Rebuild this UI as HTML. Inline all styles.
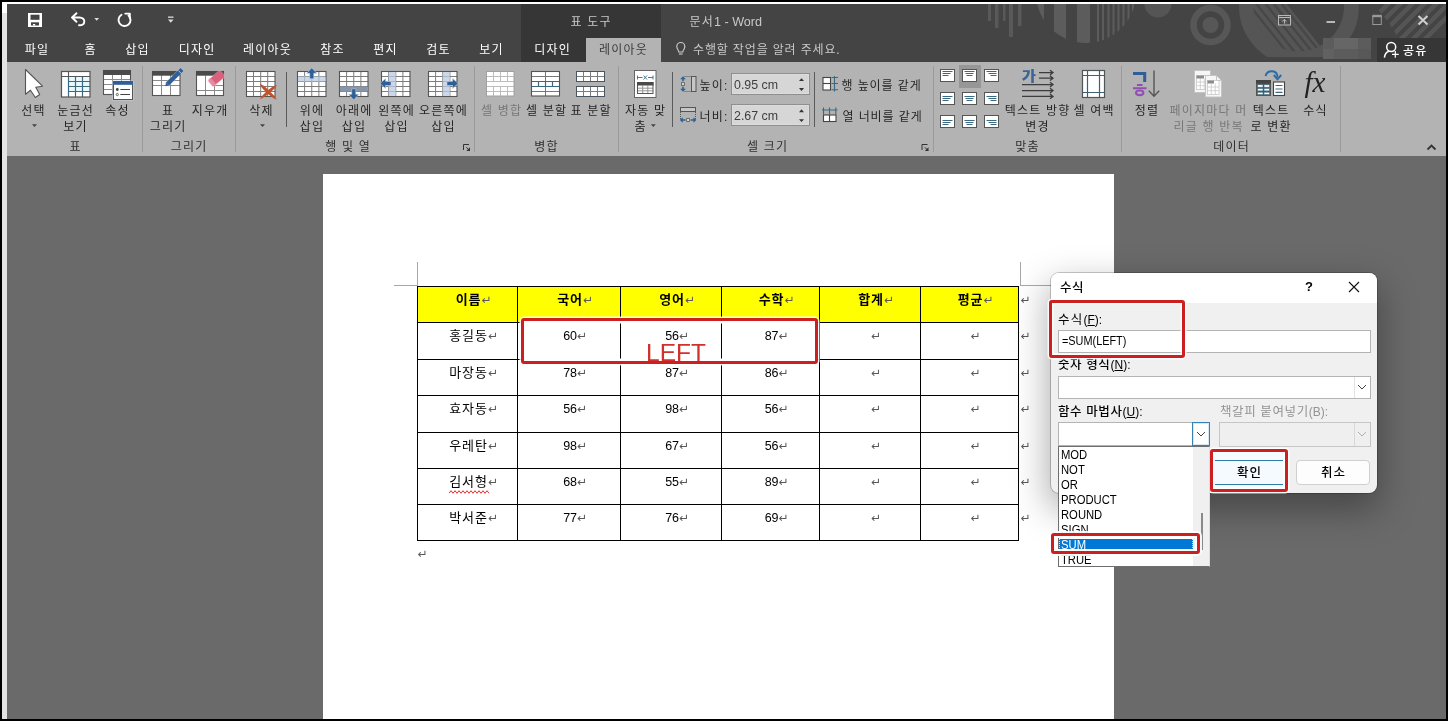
<!DOCTYPE html>
<html lang="ko">
<head>
<meta charset="utf-8">
<title>문서1 - Word</title>
<style>
*{box-sizing:border-box;margin:0;padding:0}
html,body{width:1448px;height:721px;overflow:hidden;background:#000}
body{font-family:"Liberation Sans","Noto Sans CJK KR",sans-serif;font-size:12px;letter-spacing:1.2px;color:#333;position:relative}
.a{position:absolute}
.t{margin-top:1px;padding-left:1.2px;position:absolute;white-space:nowrap;line-height:16px;height:16px;transform:translateX(-50%);text-align:center}
.l{margin-top:1px;position:absolute;white-space:nowrap;line-height:16px;height:16px}
#frame{will-change:transform;left:0;top:0;width:1448px;height:721px;background:#6a6a6a;overflow:hidden}
#title{left:7px;top:4px;width:1439px;height:58px;background:#444;overflow:hidden}
#ribbon{left:7px;top:62px;width:1439px;height:94px;background:#b3b3b3}
.tab{color:#fff;top:41px}
.bk{position:absolute;background:#000;z-index:50}
.sep{position:absolute;width:1px;background:#9a9a9a;top:66px;height:86px}
.dsep{position:absolute;width:1px;background:#5a5a5a;top:72px;height:55px}
.gl{color:#303030;top:138px}
.bl{color:#262626}
.dis{color:#787878}
.n{letter-spacing:0}
span.n{font-size:.96em}
.li{left:2px;color:#000;font-size:12.500px;line-height:15px;height:15px;transform:scaleX(.9);transform-origin:0 0}
.sx{transform-origin:0 0}
/* document */
#paper{left:323px;top:174px;width:791px;height:560px;background:#fff}
table{border-collapse:collapse}
.pm{display:inline-block;width:8px;font-family:"DejaVu Sans",sans-serif;font-size:12px;color:#585858;font-weight:normal;letter-spacing:0;vertical-align:0}
.c{color:#000;font-size:13px;letter-spacing:1px;font-weight:400;height:20px;line-height:20px}
.h{font-weight:bold}
.d{font-size:12.5px;letter-spacing:0}
</style>
</head>
<body>
<div id="frame" class="a">
<div class="a" style="left:2px;top:2px;width:5px;height:717px;background:#e4e4e4"></div>
<div class="a" style="left:2px;top:2px;width:1444px;height:2px;background:#fff"></div>
<div class="a" style="left:2px;top:2px;width:5px;height:11px;background:#fff"></div>
<div id="title" class="a"></div>
<div id="ribbon" class="a"></div>
<!--TITLEBAR-->
<svg class="a" style="left:7px;top:4px" width="1439" height="58" viewBox="7 4 1439 58">
<defs>
<clipPath id="cpSemi"><circle cx="1086" cy="-7" r="50"/></clipPath>
<clipPath id="cpBig"><circle cx="1299" cy="6" r="45.500"/></clipPath>
<clipPath id="cpY57"><rect x="1200" y="0" width="200" height="57"/></clipPath>
<clipPath id="cpTR"><path d="M1371 4 H1446 V38 H1398 C1392 26 1382 12 1371 4 Z"/></clipPath>
</defs>
<!-- table tools bg -->
<rect x="521" y="4" width="140" height="58" fill="#363636"/>
<!-- hanging bars -->
<g fill="#595959">
<rect x="988" y="4" width="3" height="17"/><rect x="995" y="4" width="3.5" height="24"/><rect x="1003" y="4" width="2.5" height="17"/><rect x="1009" y="4" width="4" height="33"/><rect x="1018" y="4" width="3.5" height="22"/>
</g>
<!-- striped semicircle -->
<g clip-path="url(#cpSemi)" fill="#5c5c5c">
<rect x="1036" y="4" width="8" height="50"/>
<rect x="1054" y="4" width="12" height="50"/>
<rect x="1077" y="4" width="13" height="50"/>
<rect x="1097" y="4" width="2" height="50"/><rect x="1102" y="4" width="2" height="50"/><rect x="1107.5" y="4" width="2" height="50"/><rect x="1112.500" y="4" width="2" height="50"/><rect x="1117.500" y="4" width="2" height="50"/><rect x="1122.500" y="4" width="2" height="50"/><rect x="1127.500" y="4" width="2" height="50"/><rect x="1132" y="4" width="2" height="50"/>
</g>
<!-- small circle -->
<circle cx="1158" cy="4" r="13.500" fill="#555"/>
<!-- concentric -->
<circle cx="1210.500" cy="25" r="17" fill="none" stroke="#575757" stroke-width="6.500"/>
<circle cx="1210.500" cy="25" r="8" fill="#575757"/>
<!-- big ring -->
<g clip-path="url(#cpY57)">
<circle cx="1299" cy="6" r="52.500" fill="none" stroke="#555" stroke-width="15"/>
<g clip-path="url(#cpBig)">
<path d="M1230 0 H1283.500 L1331.300 60 H1230 Z" fill="#555"/>
<g stroke="#474747" stroke-width="2.300"><line x1="1245.3" y1="0" x2="1293.1" y2="60"/><line x1="1253.3" y1="0" x2="1301.1" y2="60"/><line x1="1262.6" y1="0" x2="1310.4" y2="60"/><line x1="1270.8" y1="0" x2="1318.6" y2="60"/><line x1="1278.5" y1="0" x2="1326.3" y2="60"/></g>
</g>
</g>
<g clip-path="url(#cpTR)" stroke="#555" stroke-width="4.500">
<line x1="1392" y1="0" x2="1352" y2="40"/><line x1="1404" y1="0" x2="1364" y2="40"/><line x1="1416" y1="0" x2="1376" y2="40"/><line x1="1428" y1="0" x2="1388" y2="40"/><line x1="1440" y1="0" x2="1400" y2="40"/><line x1="1452" y1="0" x2="1412" y2="40"/><line x1="1464" y1="0" x2="1424" y2="40"/>
</g>
<!-- blurred account mosaic -->
<rect x="1323" y="38" width="48" height="21" fill="#5c5c5c"/>
<rect x="1334" y="38" width="24" height="11" fill="#666"/>
<rect x="1323" y="49" width="11" height="10" fill="#616161"/>
<rect x="1358" y="49" width="13" height="10" fill="#585858"/>
<!-- share btn -->
<rect x="1377" y="38" width="69" height="24" fill="#363636"/>
<!-- active tab -->
<rect x="586" y="38" width="75" height="24" fill="#b3b3b3"/>
<!-- QAT: save -->
<rect x="28" y="13" width="14" height="14" fill="#fff"/>
<rect x="30.500" y="14.700" width="9" height="5.100" fill="#444"/>
<rect x="31" y="22.300" width="8" height="3.200" fill="#444"/>
<rect x="33" y="24" width="2.200" height="1.500" fill="#fff"/>
<!-- undo -->
<path d="M76.500 13.300 L72 17.500 L76.500 21.700 M72.500 17.500 H79.500 C86 17.500 86 25.500 79 25.300" fill="none" stroke="#fff" stroke-width="1.900" stroke-linecap="round" stroke-linejoin="round"/>
<path d="M94.300 18 h4.800 l-2.400 2.700z" fill="#ddd"/>
<!-- redo -->
<path d="M121.500 14.800 A6 6 0 1 0 128.500 15.500" fill="none" stroke="#fff" stroke-width="1.900" stroke-linecap="round"/>
<path d="M125.300 13.600 H129.800 V18.200" fill="none" stroke="#fff" stroke-width="1.900" stroke-linecap="round" stroke-linejoin="round"/>
<!-- customize -->
<rect x="168" y="16.500" width="5.500" height="1.300" fill="#ddd"/>
<path d="M168 19.500 h5.500 l-2.750 3.200z" fill="#ddd"/>
<!-- window controls -->
<g fill="none" stroke="#b8b8b8">
<rect x="1278.500" y="15.500" width="12" height="9.500" stroke-width="1"/>
<line x1="1278.500" y1="17.500" x2="1290.500" y2="17.500" stroke-width="1"/>
<path d="M1284.500 23.500 V19.500 M1282.300 21.500 L1284.500 19.300 L1286.700 21.500" stroke-width="1"/>
<line x1="1326.500" y1="22" x2="1335" y2="22" stroke-width="2"/>
<rect x="1372.800" y="16.500" width="8.500" height="8" stroke-width="1" stroke="#999"/>
<line x1="1372.300" y1="16" x2="1381.800" y2="16" stroke-width="2.400" stroke="#999"/>
<path d="M1418.500 16 L1427.500 24.500 M1427.500 16 L1418.500 24.500" stroke-width="2" stroke="#d0d0d0"/>
</g>
<!-- share icon -->
<g fill="none" stroke="#fff" stroke-width="1.500">
<circle cx="1391.200" cy="47" r="4.500"/>
<path d="M1384.400 57.700 C1384.800 54 1386.500 52 1388.800 51.200"/>
<path d="M1395.300 51 V57.700 M1392 54.300 H1398.700" stroke-width="1.200"/>
</g>
<!-- bulb -->
<g fill="none" stroke="#c8c8c8" stroke-width="1.200">
<path d="M678.800 52 C678.800 50 676.800 49.300 676.800 46.500 A4 4 0 0 1 684.800 46.500 C684.800 49.300 682.800 50 682.800 52 Z"/>
<line x1="679" y1="54" x2="682.600" y2="54"/>
</g>
</svg>
<div class="t" style="left:590.500px;top:13px;color:#c8c8c8">표 도구</div>
<div class="l" style="left:689.500px;top:13px;color:#c8c8c8">문서<span class="n" style="font-size:12.600px">1 - Word</span></div>
<div class="t tab" style="left:36.500px">파일</div>
<div class="t tab" style="left:90px">홈</div>
<div class="t tab" style="left:137px">삽입</div>
<div class="t tab" style="left:196.500px">디자인</div>
<div class="t tab" style="left:267px">레이아웃</div>
<div class="t tab" style="left:332px">참조</div>
<div class="t tab" style="left:385px">편지</div>
<div class="t tab" style="left:438px">검토</div>
<div class="t tab" style="left:491px">보기</div>
<div class="t tab" style="left:552px">디자인</div>
<div class="t tab" style="left:623px;color:#3c3c3c">레이아웃</div>
<div class="l tab" style="left:693px;color:#c8c8c8;letter-spacing:.85px">수행할 작업을 알려 주세요.</div>
<div class="l tab" style="left:1403px;top:42px;font-weight:500">공유</div>
<!--/TITLEBAR-->
<!--RIBBON-->
<div class="sep" style="left:142px"></div>
<div class="sep" style="left:235px"></div>
<div class="sep" style="left:474px"></div>
<div class="sep" style="left:618px"></div>
<div class="sep" style="left:933px"></div>
<div class="sep" style="left:1121px"></div>
<div class="sep" style="left:1340px"></div>
<div class="dsep" style="left:286px"></div>
<div class="dsep" style="left:672px"></div>
<div class="dsep" style="left:814px"></div>
<!-- group 표 -->
<div class="t bl" style="left:33px;top:102px">선택</div>
<div class="t bl" style="left:75px;top:102px">눈금선</div>
<div class="t bl" style="left:75px;top:118px">보기</div>
<div class="t bl" style="left:117px;top:102px">속성</div>
<div class="t gl" style="left:75px">표</div>
<!-- group 그리기 -->
<div class="t bl" style="left:167.500px;top:102px">표</div>
<div class="t bl" style="left:167.500px;top:118px">그리기</div>
<div class="t bl" style="left:209.500px;top:102px">지우개</div>
<div class="t gl" style="left:188.500px">그리기</div>
<!-- group 행 및 열 -->
<div class="t bl" style="left:261px;top:102px">삭제</div>
<div class="t bl" style="left:311.500px;top:102px">위에</div>
<div class="t bl" style="left:311.500px;top:118px">삽입</div>
<div class="t bl" style="left:353.500px;top:102px">아래에</div>
<div class="t bl" style="left:353.500px;top:118px">삽입</div>
<div class="t bl" style="left:396px;top:102px">왼쪽에</div>
<div class="t bl" style="left:396px;top:118px">삽입</div>
<div class="t bl" style="left:443px;top:102px">오른쪽에</div>
<div class="t bl" style="left:443px;top:118px">삽입</div>
<div class="t gl" style="left:347.500px">행 및 열</div>
<!-- group 병합 -->
<div class="t dis" style="left:501px;top:102px">셀 병합</div>
<div class="t bl" style="left:546px;top:102px">셀 분할</div>
<div class="t bl" style="left:590.500px;top:102px">표 분할</div>
<div class="t gl" style="left:546px">병합</div>
<!-- group 셀 크기 -->
<div class="t bl" style="left:645px;top:102px">자동 맞</div>
<div class="t bl" style="left:640px;top:118px">춤</div>
<div class="l bl" style="left:699.500px;top:77px">높이:</div>
<div class="l bl" style="left:699.500px;top:108px">너비:</div>
<div class="a" style="left:731px;top:73px;width:79px;height:22px;background:#d6d6d6;border:1px solid #8f8f8f;box-shadow:inset 0 0 0 1px #dcdcdc"></div>
<div class="a" style="left:731px;top:104px;width:79px;height:22px;background:#d6d6d6;border:1px solid #8f8f8f;box-shadow:inset 0 0 0 1px #dcdcdc"></div>
<div class="l n" style="left:734px;top:76px;font-size:12.400px;color:#3e3e3e">0.95 cm</div>
<div class="l n" style="left:734px;top:107px;font-size:12.400px;color:#3e3e3e">2.67 cm</div>
<div class="l bl" style="left:841.500px;top:77px;letter-spacing:.9px">행 높이를 같게</div>
<div class="l bl" style="left:842.500px;top:108px;letter-spacing:.9px">열 너비를 같게</div>
<div class="t gl" style="left:767px">셀 크기</div>
<!-- group 맞춤 -->
<div class="a" style="left:959px;top:65px;width:22px;height:23px;background:#979797"></div>
<div class="t bl" style="left:1037px;top:102px">텍스트 방향</div>
<div class="t bl" style="left:1037px;top:118px">변경</div>
<div class="t bl" style="left:1093.500px;top:102px">셀 여백</div>
<div class="t gl" style="left:1027px">맞춤</div>
<!-- group 데이터 -->
<div class="t bl" style="left:1146.500px;top:102px">정렬</div>
<div class="t dis" style="left:1208px;top:102px">페이지마다 머</div>
<div class="t dis" style="left:1208px;top:118px">리글 행 반복</div>
<div class="t bl" style="left:1270.500px;top:102px">텍스트</div>
<div class="t bl" style="left:1270.500px;top:118px">로 변환</div>
<div class="t bl" style="left:1315px;top:102px">수식</div>
<div class="t gl" style="left:1231px">데이터</div>
<!--ICONS-->
<svg class="a" style="left:0;top:62px" width="1448" height="94" viewBox="0 62 1448 94">
<path d="M25.5 69.5 V94.3 L30.5 90.2 L35.3 97.5 L39.7 94.5 L35.8 87.3 L42.5 86.2 Z" fill="#fff" stroke="#555" stroke-width="1.1" stroke-linejoin="round"/>
<path d="M32 124.3 h5 l-2.5 2.7z" fill="#444"/>
<rect x="61.5" y="71.5" width="28.5" height="25.5" fill="#fff"/>
<rect x="68.5" y="76.5" width="21.5" height="15" fill="#eaf7fb"/>
<path d="M68.5 76.5V97M75.5 76.5V97M82.5 76.5V97M68.5 81.5H90M68.5 86.5H90M68.5 91.5H90" stroke="#3a6a82" stroke-width="1.2" fill="none"/>
<path d="M68.5 71.5V76.5M61.5 76.5H90" stroke="#555" stroke-width="1.1" fill="none"/>
<rect x="61.5" y="71.5" width="28.5" height="25.5" fill="none" stroke="#555" stroke-width="1.2"/>
<rect x="103.5" y="70.5" width="27" height="24" fill="#fff"/>
<path d="M112.5 70.5V94.5M121.5 70.5V94.5M103.5 79.5H130.5M103.5 84.5H130.5M103.5 89.5H130.5" stroke="#8a8a8a" stroke-width="1" fill="none"/>
<rect x="103.5" y="70.5" width="27" height="24" fill="none" stroke="#555" stroke-width="1.1"/>
<rect x="103" y="70" width="28" height="5" fill="#4a4a4a"/>
<rect x="112.5" y="80.5" width="21" height="20" fill="#c9d9ec" opacity=".8"/>
<rect x="113.5" y="81.5" width="19" height="18" fill="#fff" stroke="#555" stroke-width="1"/>
<rect x="113" y="81" width="20" height="3.8" fill="#2e5f96"/>
<circle cx="117.3" cy="89.5" r="1.4" fill="#444"/><circle cx="117.3" cy="94.5" r="1.1" fill="none" stroke="#444" stroke-width=".8"/>
<path d="M120.3 89.5H130M120.3 94.5H130" stroke="#444" stroke-width="1"/>
<rect x="152.5" y="71.5" width="27.5" height="24" fill="#fff"/>
<path d="M161.5 71.5V95.5M170.5 71.5V95.5M152.5 80.5H180M152.5 85.5H180" stroke="#8a8a8a" stroke-width="1" fill="none"/>
<rect x="152.5" y="71.5" width="27.5" height="24" fill="none" stroke="#555" stroke-width="1.1"/>
<rect x="152" y="71" width="28.5" height="4.7" fill="#4a4a4a"/>
<path d="M166.5 85 L182.3 69.2" stroke="#c3d3e6" stroke-width="5.6" opacity=".45"/>
<path d="M167.5 84 L182 69.5" stroke="#2e5f96" stroke-width="4.2"/>
<path d="M165.3 86.3 L166 82.6 L169 85.6 Z" fill="#2e5f96"/>
<path d="M178.3 70.5 L181.3 73.5" stroke="#c3d3e6" stroke-width=".9"/>
<rect x="196.5" y="71.5" width="27" height="24" fill="#fff"/>
<path d="M205.5 75.5V95.5M214.5 75.5V95.5M214.5 85.5H223.5M196.5 90.5H223.5" stroke="#8a8a8a" stroke-width="1" fill="none"/>
<rect x="196.5" y="71.5" width="27" height="24" fill="none" stroke="#555" stroke-width="1.1"/>
<rect x="196" y="71" width="28" height="4.7" fill="#4a4a4a"/>
<g transform="translate(216.5 78.5) rotate(-40)"><rect x="-8.5" y="-4.8" width="17" height="9.6" rx="1.8" fill="#e9a9b6" opacity=".55"/><rect x="-7.5" y="-3.9" width="15" height="7.8" rx="1.5" fill="#dc5f7c"/><rect x="-7.5" y="-3.9" width="3.6" height="7.8" rx="1.2" fill="#e58aa0"/></g>
<rect x="246.5" y="71.5" width="28.5" height="25" fill="#fff"/>
<path d="M253.5 71.5V96.5M260.7 71.5V96.5M267.7 71.5V96.5M246.5 76.5H275M246.5 81.5H275M246.5 86.5H275M246.5 91.5H275" stroke="#7d7d7d" stroke-width="1" fill="none"/>
<rect x="246.5" y="71.5" width="28.5" height="25" fill="none" stroke="#555" stroke-width="1.1"/>
<path d="M259.8 84 C263 84.5 266.5 88 269 90.5 C272 93.5 275.5 96.5 276.8 99.7 C273 98.5 269.5 95.5 266.8 92.8 C264 90 261 87.5 259.8 84 Z M277 85 C275.5 88 272.5 90.5 269.8 93 C267 95.5 263.5 98 259.8 99.3 C261.5 95.8 264.5 93.3 267.3 90.7 C270 88.3 273.5 85.8 277 85 Z" fill="#c0532c"/>
<path d="M260 124.3 h5 l-2.5 2.7z" fill="#444"/>
<rect x="297.5" y="71.5" width="28.5" height="25" fill="#fff"/>
<path d="M304.62 71.5V96.5M311.75 71.5V96.5M318.88 71.5V96.5M297.5 76.5H326M297.5 81.5H326M297.5 86.5H326M297.5 91.5H326" stroke="#7d7d7d" stroke-width="1" fill="none"/>
<rect x="297.5" y="71.5" width="28.5" height="25" fill="none" stroke="#555" stroke-width="1.1"/>
<rect x="298" y="76.5" width="27.5" height="5" fill="#c3d1e6" opacity=".85"/>
<path d="M304.6 76.5V81.5M311.75 76.5V81.5M318.9 76.5V81.5" stroke="#aab8cc" stroke-width="1"/>
<path d="M311.75 67.8 L316.8 73.3 H313.8 V78.8 H309.7 V73.3 H306.7 Z" fill="#2e5f96" stroke="#c3d3e6" stroke-width=".6"/>
<rect x="339.5" y="71.5" width="28.5" height="25" fill="#fff"/>
<path d="M346.62 71.5V96.5M353.75 71.5V96.5M360.88 71.5V96.5M339.5 76.5H368M339.5 81.5H368M339.5 86.5H368M339.5 91.5H368" stroke="#7d7d7d" stroke-width="1" fill="none"/>
<rect x="339.5" y="71.5" width="28.5" height="25" fill="none" stroke="#555" stroke-width="1.1"/>
<rect x="340" y="86.5" width="27.5" height="5" fill="#8796aa"/>
<path d="M353.7 100 L358.8 94.3 H355.8 V88.8 H351.7 V94.3 H348.7 Z" fill="#2e5f96" stroke="#c3d3e6" stroke-width=".6"/>
<rect x="381.5" y="71.5" width="28.5" height="25" fill="#fff"/>
<path d="M388.62 71.5V96.5M395.75 71.5V96.5M402.88 71.5V96.5M381.5 76.5H410M381.5 81.5H410M381.5 86.5H410M381.5 91.5H410" stroke="#7d7d7d" stroke-width="1" fill="none"/>
<rect x="381.5" y="71.5" width="28.5" height="25" fill="none" stroke="#555" stroke-width="1.1"/>
<rect x="388.7" y="72" width="7" height="24" fill="#c3d1e6" opacity=".85"/>
<path d="M388.7 76.5H395.7M388.7 81.5H395.7M388.7 86.5H395.7M388.7 91.5H395.7" stroke="#aab8cc" stroke-width="1"/>
<path d="M380 83.5 L385.6 78.4 V81.5 H391 V85.5 H385.6 V88.6 Z" fill="#2e5f96" stroke="#c3d3e6" stroke-width=".6"/>
<rect x="428.5" y="71.5" width="28.5" height="25" fill="#fff"/>
<path d="M435.62 71.5V96.5M442.75 71.5V96.5M449.88 71.5V96.5M428.5 76.5H457M428.5 81.5H457M428.5 86.5H457M428.5 91.5H457" stroke="#7d7d7d" stroke-width="1" fill="none"/>
<rect x="428.5" y="71.5" width="28.5" height="25" fill="none" stroke="#555" stroke-width="1.1"/>
<rect x="442.8" y="72" width="7" height="24" fill="#c3d1e6" opacity=".85"/>
<path d="M442.8 76.5H449.8M442.8 81.5H449.8M442.8 86.5H449.8M442.8 91.5H449.8" stroke="#aab8cc" stroke-width="1"/>
<path d="M458.2 83.5 L452.6 78.4 V81.5 H447 V85.5 H452.6 V88.6 Z" fill="#2e5f96" stroke="#c3d3e6" stroke-width=".6"/>
<path d="M469 144.5 H463.5 V150" stroke="#333" stroke-width="1" fill="none"/>
<path d="M466.3 147.3 L469.5 150.5" stroke="#333" stroke-width="1" fill="none"/><path d="M470 147.3 V151 H466.3 Z" fill="#333"/>
<path d="M927.5 144.5 H922 V150" stroke="#333" stroke-width="1" fill="none"/>
<path d="M924.8 147.3 L928 150.5" stroke="#333" stroke-width="1" fill="none"/><path d="M928.5 147.3 V151 H924.8 Z" fill="#333"/>
<rect x="486.5" y="71.5" width="27.5" height="24.5" fill="#fff"/>
<path d="M493.5 71.5V81.5M500.5 71.5V81.5M507.5 71.5V81.5M493.5 86.5V96M500.5 86.5V96M507.5 86.5V96M486.5 76.5H514M486.5 81.5H514M486.5 86.5H514M486.5 91.5H514" stroke="#bdbdbd" stroke-width="1" fill="none"/>
<rect x="486.5" y="71.5" width="27.5" height="24.5" fill="none" stroke="#a0a0a0" stroke-width="1"/>
<rect x="531.5" y="71.5" width="28" height="24.5" fill="#fff"/>
<path d="M545.5 71.5V96M531.5 76.5H559.5M531.5 91.5H559.5" stroke="#777" stroke-width="1" fill="none"/>
<path d="M531.5 81.5H559.5M531.5 86.5H559.5M538.5 81.5V86.5M545.5 81.5V86.5M552.5 81.5V86.5" stroke="#3a6a82" stroke-width="1.2" fill="none"/>
<rect x="531.5" y="71.5" width="28" height="24.5" fill="none" stroke="#555" stroke-width="1.1"/>
<rect x="576.5" y="71.5" width="28" height="10" fill="#fff"/>
<path d="M583.5 71.5V81.5M590.5 71.5V81.5M597.5 71.5V81.5M576.5 76.5H604.5" stroke="#7d7d7d" stroke-width="1" fill="none"/>
<rect x="576.5" y="71.5" width="28" height="10" fill="none" stroke="#4a5560" stroke-width="1"/>
<rect x="576.5" y="86.5" width="28" height="10" fill="#fff"/>
<path d="M583.5 86.5V96.5M590.5 86.5V96.5M597.5 86.5V96.5M576.5 91.5H604.5" stroke="#7d7d7d" stroke-width="1" fill="none"/>
<rect x="576.5" y="86.5" width="28" height="10" fill="none" stroke="#4a5560" stroke-width="1"/>
<rect x="634.5" y="70.5" width="21.5" height="27" fill="#fff" stroke="#666" stroke-width="1"/>
<path d="M637.5 75.5V79.5M653 75.5V79.5M637.5 77.5H642.5M648 77.5H653M643.5 75.5L647 79.5M647 75.5L643.5 79.5" stroke="#3a6a82" stroke-width=".9" fill="none"/>
<rect x="637.5" y="82.5" width="15.5" height="11" fill="#fff"/>
<path d="M642.7 85.5V93.5M647.8 85.5V93.5M637.5 88.2H653M637.5 90.8H653" stroke="#8a8a8a" stroke-width=".9" fill="none"/>
<rect x="637.5" y="82.5" width="15.5" height="11" fill="none" stroke="#555" stroke-width="1"/>
<rect x="637" y="82" width="16.5" height="3.5" fill="#4a4a4a"/>
<path d="M650.8 124.3 h5 l-2.5 2.7z" fill="#444"/>
<rect x="691.5" y="76.5" width="4.5" height="15" fill="#c6c6c6" stroke="#555" stroke-width="1"/>
<path d="M684.5 76.5H691M684.5 91.5H691" stroke="#555" stroke-width="1" stroke-dasharray="1 1"/>
<path d="M683 76.3 L685.8 79.3 H683.8 V81.3 H682.2 V79.3 H680.2 Z M683 91.7 L685.8 88.7 H683.8 V86.7 H682.2 V88.7 H680.2 Z" fill="#2e5f96"/>
<rect x="681.5" y="82.7" width="3" height="2.8" fill="#ddd" stroke="#555" stroke-width=".8"/>
<rect x="680.5" y="107.5" width="15" height="4" fill="#c6c6c6" stroke="#555" stroke-width="1"/>
<path d="M680.5 112V120M695.5 112V120" stroke="#555" stroke-width="1" stroke-dasharray="1 1"/>
<path d="M679.8 120 L682.8 117.2 V119.2 H685.5 V120.8 H682.8 V122.8 Z M696.4 120 L693.4 117.2 V119.2 H690.7 V120.8 H693.4 V122.8 Z" fill="#2e5f96"/>
<rect x="686.7" y="118.6" width="2.8" height="2.8" fill="#ddd" stroke="#555" stroke-width=".8"/>
<path d="M799 81.1 h5 l-2.5 -2.9z M799 88.1 h5 l-2.5 2.9z" fill="#333"/>
<path d="M799 112.2 h5 l-2.5 -2.9z M799 119.2 h5 l-2.5 2.9z" fill="#333"/>
<rect x="823" y="77.5" width="7.5" height="12.5" fill="#fff" stroke="#444" stroke-width="1.1"/>
<path d="M823 83.5H830.5" stroke="#444" stroke-width="1.1"/>
<path d="M834.5 76V91.5M831.5 77.5H838M831.5 83.5H838M831.5 89.8H838" stroke="#3a6a82" stroke-width="1.1" fill="none"/>
<rect x="823.5" y="115" width="12.5" height="6.5" fill="#fff" stroke="#444" stroke-width="1.1"/>
<path d="M829.5 115V121.5" stroke="#444" stroke-width="1.1"/>
<path d="M822 110H837.5M823.5 107.5V114.5M829.5 107.5V114.5M835.8 107.5V114.5" stroke="#3a6a82" stroke-width="1.1" fill="none"/>
<rect x="940.5" y="69.5" width="14" height="12" fill="#fff" stroke="#555" stroke-width="1"/>
<path d="M942.5 71.5H952.5M942.5 73.5H950.5M942.5 75.5H948.5" stroke="#3a6a82" stroke-width="1" fill="none"/>
<rect x="962.5" y="69.5" width="14" height="12" fill="#fff" stroke="#555" stroke-width="1"/>
<path d="M964.5 71.5H974.5M965.5 73.5H973.5M966.5 75.5H972.5" stroke="#3a6a82" stroke-width="1" fill="none"/>
<rect x="984.5" y="69.5" width="14" height="12" fill="#fff" stroke="#555" stroke-width="1"/>
<path d="M986.5 71.5H996.5M988.5 73.5H996.5M990.5 75.5H996.5" stroke="#3a6a82" stroke-width="1" fill="none"/>
<rect x="940.5" y="92.5" width="14" height="12" fill="#fff" stroke="#555" stroke-width="1"/>
<path d="M942.5 96.5H952.5M942.5 98.5H950.5M942.5 100.5H948.5" stroke="#3a6a82" stroke-width="1" fill="none"/>
<rect x="962.5" y="92.5" width="14" height="12" fill="#fff" stroke="#555" stroke-width="1"/>
<path d="M964.5 96.5H974.5M965.5 98.5H973.5M966.5 100.5H972.5" stroke="#3a6a82" stroke-width="1" fill="none"/>
<rect x="984.5" y="92.5" width="14" height="12" fill="#fff" stroke="#555" stroke-width="1"/>
<path d="M986.5 96.5H996.5M988.5 98.5H996.5M990.5 100.5H996.5" stroke="#3a6a82" stroke-width="1" fill="none"/>
<rect x="940.5" y="115.5" width="14" height="12" fill="#fff" stroke="#555" stroke-width="1"/>
<path d="M942.5 120.5H952.5M942.5 122.5H950.5M942.5 124.5H948.5" stroke="#3a6a82" stroke-width="1" fill="none"/>
<rect x="962.5" y="115.5" width="14" height="12" fill="#fff" stroke="#555" stroke-width="1"/>
<path d="M964.5 120.5H974.5M965.5 122.5H973.5M966.5 124.5H972.5" stroke="#3a6a82" stroke-width="1" fill="none"/>
<rect x="984.5" y="115.5" width="14" height="12" fill="#fff" stroke="#555" stroke-width="1"/>
<path d="M986.5 120.5H996.5M988.5 122.5H996.5M990.5 124.5H996.5" stroke="#3a6a82" stroke-width="1" fill="none"/>
<path d="M1039 72.6H1052.5M1050 70.2L1053 72.6L1050 75M1039 78.2H1052.5M1050 75.8L1053 78.2L1050 80.6M1022 84.6H1052.5M1050 82.2L1053 84.6L1050 87M1022 90.6H1052.5M1050 88.2L1053 90.6L1050 93M1022 96.4H1052.5M1050 94L1053 96.4L1050 98.8" stroke="#3c3c3c" stroke-width="1.3" fill="none"/>
<text transform="translate(1021.8 80.8) scale(1.12 1)" x="0" y="0" font-size="13.8" font-weight="900" letter-spacing="0" fill="#3a6596" font-family="Liberation Sans, Noto Sans CJK KR, sans-serif">가</text>
<rect x="1082.5" y="70.5" width="22" height="27" fill="#fff"/>
<path d="M1087.5 70.5V97.5M1099.5 70.5V97.5M1082.5 75.5H1104.5M1082.5 92.5H1104.5" stroke="#3f6073" stroke-width="1.2" fill="none"/>
<rect x="1082.5" y="70.5" width="22" height="27" fill="none" stroke="#505558" stroke-width="1.2"/>
<path d="M1133 73.5 H1144.7 V82" stroke="#2e5f96" stroke-width="3" fill="none"/>
<path d="M1137 85 H1142.5 M1133 88.3 H1146.5" stroke="#9050b3" stroke-width="2.1" fill="none"/><ellipse cx="1139.7" cy="92.8" rx="3.7" ry="2.3" fill="none" stroke="#9050b3" stroke-width="2.1"/>
<path d="M1154 70.5V96M1148.8 90.8L1154 96.3L1159.2 90.8" stroke="#555" stroke-width="1.4" fill="none"/>
<rect x="1194.5" y="70.5" width="16" height="22" fill="#f6f6f6" stroke="#c4c4c4" stroke-width="1"/>
<rect x="1196.5" y="75.5" width="11.5" height="14" fill="#fff" stroke="#c8c8c8" stroke-width=".8"/>
<path d="M1200.3 78.5V89.5M1204.2 78.5V89.5M1196.5 82H1208M1196.5 85.7H1208" stroke="#c8c8c8" stroke-width=".8" fill="none"/>
<rect x="1196.5" y="75.5" width="7.5" height="3" fill="#8c8c8c"/>
<path d="M1205.5 75.5 H1216.5 L1221.5 80.5 V97 H1205.5 Z" fill="#f6f6f6" stroke="#c4c4c4" stroke-width="1"/>
<path d="M1216.5 75.5 V80.5 H1221.5" fill="none" stroke="#c4c4c4" stroke-width="1"/>
<rect x="1207.5" y="80.5" width="11.5" height="14" fill="#fff" stroke="#c8c8c8" stroke-width=".8"/>
<path d="M1211.3 83.5V94.5M1215.2 83.5V94.5M1207.5 87H1219M1207.5 90.7H1219" stroke="#c8c8c8" stroke-width=".8" fill="none"/>
<rect x="1207.5" y="80.5" width="6.5" height="3" fill="#8c8c8c"/>
<rect x="1256" y="80" width="15" height="16" fill="#555"/>
<rect x="1256" y="80" width="15" height="3.5" fill="#444"/>
<rect x="1257.5" y="84.8" width="5.5" height="2.4" fill="#fff" stroke="#3a6a82" stroke-width=".6"/>
<rect x="1264" y="84.8" width="5.5" height="2.4" fill="#fff" stroke="#3a6a82" stroke-width=".6"/>
<rect x="1257.5" y="88.5" width="5.5" height="2.4" fill="#fff" stroke="#3a6a82" stroke-width=".6"/>
<rect x="1264" y="88.5" width="5.5" height="2.4" fill="#fff" stroke="#3a6a82" stroke-width=".6"/>
<rect x="1257.5" y="92.2" width="5.5" height="2.4" fill="#fff" stroke="#3a6a82" stroke-width=".6"/>
<rect x="1264" y="92.2" width="5.5" height="2.4" fill="#fff" stroke="#3a6a82" stroke-width=".6"/>
<rect x="1273.5" y="82" width="11" height="13.5" fill="#fff" stroke="#444" stroke-width="1.1"/>
<path d="M1275.5 85.5H1282.5M1275.5 89H1282.5M1275.5 92.4H1282.5" stroke="#3a6a82" stroke-width="1.1"/>
<path d="M1265.5 76 C1267.5 69.5 1277.5 69.5 1277.5 77.5" stroke="#2e6da4" stroke-width="2" fill="none"/><path d="M1273.8 75 L1277.5 79.3 L1281.2 75" stroke="#2e6da4" stroke-width="2" fill="none"/>
<text x="1304.5" y="92" font-size="29" font-style="italic" fill="#222" letter-spacing="0" font-family="Liberation Serif, serif">fx</text>
<path d="M1427.5 149.5 L1431.5 145.5 L1435.5 149.5" stroke="#333" stroke-width="1.8" fill="none"/>
</svg>
<!--/ICONS-->
<!--/RIBBON-->
<!--DOC-->
<div id="paper" class="a"></div>
<div class="a" style="left:394px;top:285px;width:23px;height:1px;background:#a8a8a8"></div>
<div class="a" style="left:417px;top:262px;width:1px;height:24px;background:#a8a8a8"></div>
<div class="a" style="left:1020px;top:262px;width:1px;height:24px;background:#a8a8a8"></div>
<div class="a" style="left:1020px;top:285px;width:32px;height:1px;background:#a8a8a8"></div>
<div class="a" style="left:417px;top:286px;width:602px;height:37px;background:#ffff00"></div>
<div class="a" style="left:417px;top:286px;width:1px;height:255px;background:#000"></div>
<div class="a" style="left:517px;top:286px;width:1px;height:255px;background:#000"></div>
<div class="a" style="left:620px;top:286px;width:1px;height:255px;background:#000"></div>
<div class="a" style="left:721px;top:286px;width:1px;height:255px;background:#000"></div>
<div class="a" style="left:819px;top:286px;width:1px;height:255px;background:#000"></div>
<div class="a" style="left:920px;top:286px;width:1px;height:255px;background:#000"></div>
<div class="a" style="left:1018px;top:286px;width:1px;height:255px;background:#000"></div>
<div class="a" style="left:417px;top:286px;width:602px;height:1px;background:#000"></div>
<div class="a" style="left:417px;top:322px;width:602px;height:1px;background:#000"></div>
<div class="a" style="left:417px;top:359px;width:602px;height:1px;background:#000"></div>
<div class="a" style="left:417px;top:395px;width:602px;height:1px;background:#000"></div>
<div class="a" style="left:417px;top:432px;width:602px;height:1px;background:#000"></div>
<div class="a" style="left:417px;top:468px;width:602px;height:1px;background:#000"></div>
<div class="a" style="left:417px;top:504px;width:602px;height:1px;background:#000"></div>
<div class="a" style="left:417px;top:540px;width:602px;height:1px;background:#000"></div>
<div class="t c h" style="left:472.0px;top:289px">이름<span class="pm">↵</span></div>
<div class="t c h" style="left:573.5px;top:289px">국어<span class="pm">↵</span></div>
<div class="t c h" style="left:675.5px;top:289px">영어<span class="pm">↵</span></div>
<div class="t c h" style="left:775.0px;top:289px">수학<span class="pm">↵</span></div>
<div class="t c h" style="left:874.5px;top:289px">합계<span class="pm">↵</span></div>
<div class="t c h" style="left:974.0px;top:289px">평균<span class="pm">↵</span></div>
<div class="t c" style="left:472.0px;top:325px">홍길동<span class="pm">↵</span></div>
<div class="t c" style="left:573.5px;top:325px"><span class="d">60</span><span class="pm">↵</span></div>
<div class="t c" style="left:675.5px;top:325px"><span class="d">56</span><span class="pm">↵</span></div>
<div class="t c" style="left:775.0px;top:325px"><span class="d">87</span><span class="pm">↵</span></div>
<div class="t c" style="left:874.5px;top:325px"><span class="pm">↵</span></div>
<div class="t c" style="left:974.0px;top:325px"><span class="pm">↵</span></div>
<div class="t c" style="left:472.0px;top:362px">마장동<span class="pm">↵</span></div>
<div class="t c" style="left:573.5px;top:362px"><span class="d">78</span><span class="pm">↵</span></div>
<div class="t c" style="left:675.5px;top:362px"><span class="d">87</span><span class="pm">↵</span></div>
<div class="t c" style="left:775.0px;top:362px"><span class="d">86</span><span class="pm">↵</span></div>
<div class="t c" style="left:874.5px;top:362px"><span class="pm">↵</span></div>
<div class="t c" style="left:974.0px;top:362px"><span class="pm">↵</span></div>
<div class="t c" style="left:472.0px;top:398px">효자동<span class="pm">↵</span></div>
<div class="t c" style="left:573.5px;top:398px"><span class="d">56</span><span class="pm">↵</span></div>
<div class="t c" style="left:675.5px;top:398px"><span class="d">98</span><span class="pm">↵</span></div>
<div class="t c" style="left:775.0px;top:398px"><span class="d">56</span><span class="pm">↵</span></div>
<div class="t c" style="left:874.5px;top:398px"><span class="pm">↵</span></div>
<div class="t c" style="left:974.0px;top:398px"><span class="pm">↵</span></div>
<div class="t c" style="left:472.0px;top:435px">우레탄<span class="pm">↵</span></div>
<div class="t c" style="left:573.5px;top:435px"><span class="d">98</span><span class="pm">↵</span></div>
<div class="t c" style="left:675.5px;top:435px"><span class="d">67</span><span class="pm">↵</span></div>
<div class="t c" style="left:775.0px;top:435px"><span class="d">56</span><span class="pm">↵</span></div>
<div class="t c" style="left:874.5px;top:435px"><span class="pm">↵</span></div>
<div class="t c" style="left:974.0px;top:435px"><span class="pm">↵</span></div>
<div class="t c" style="left:472.0px;top:471px">김서형<span class="pm">↵</span></div>
<div class="t c" style="left:573.5px;top:471px"><span class="d">68</span><span class="pm">↵</span></div>
<div class="t c" style="left:675.5px;top:471px"><span class="d">55</span><span class="pm">↵</span></div>
<div class="t c" style="left:775.0px;top:471px"><span class="d">89</span><span class="pm">↵</span></div>
<div class="t c" style="left:874.5px;top:471px"><span class="pm">↵</span></div>
<div class="t c" style="left:974.0px;top:471px"><span class="pm">↵</span></div>
<div class="t c" style="left:472.0px;top:507px">박서준<span class="pm">↵</span></div>
<div class="t c" style="left:573.5px;top:507px"><span class="d">77</span><span class="pm">↵</span></div>
<div class="t c" style="left:675.5px;top:507px"><span class="d">76</span><span class="pm">↵</span></div>
<div class="t c" style="left:775.0px;top:507px"><span class="d">69</span><span class="pm">↵</span></div>
<div class="t c" style="left:874.5px;top:507px"><span class="pm">↵</span></div>
<div class="t c" style="left:974.0px;top:507px"><span class="pm">↵</span></div>
<div class="l c" style="left:1020.5px;top:289px"><span class="pm">↵</span></div>
<div class="l c" style="left:1020.5px;top:325px"><span class="pm">↵</span></div>
<div class="l c" style="left:1020.5px;top:362px"><span class="pm">↵</span></div>
<div class="l c" style="left:1020.5px;top:398px"><span class="pm">↵</span></div>
<div class="l c" style="left:1020.5px;top:435px"><span class="pm">↵</span></div>
<div class="l c" style="left:1020.5px;top:471px"><span class="pm">↵</span></div>
<div class="l c" style="left:1020.5px;top:507px"><span class="pm">↵</span></div>
<div class="l c" style="left:417.5px;top:543px"><span class="pm">↵</span></div>
<svg class="a" style="left:449px;top:490px" width="42" height="4" viewBox="0 0 42 4"><path d="M0 3.3 l2 -2.6 l2 2.6 l2 -2.6 l2 2.6 l2 -2.6 l2 2.6 l2 -2.6 l2 2.6 l2 -2.6 l2 2.6 l2 -2.6 l2 2.6 l2 -2.6 l2 2.6 l2 -2.6 l2 2.6 l2 -2.6 l2 2.6 l2 -2.6 l2 2.6" fill="none" stroke="#e03030" stroke-width="1"/></svg>
<div class="a" style="left:521px;top:318px;width:297px;height:46px;border:3px solid #cc1f1f;border-radius:3px;box-shadow:0 0 0 1.5px rgba(255,255,255,.85),inset 0 0 0 2.5px #fff"></div>
<div class="l n" style="left:646px;top:337px;font-size:24.5px;line-height:30px;height:30px;color:#d0312c">LEFT</div>
<!--/DOC-->
<!--DIALOG-->
<div class="a" style="left:1051px;top:273px;width:326px;height:220px;border-radius:8px;background:#f0f0f0;box-shadow:0 0 0 1px rgba(0,0,0,.2),0 14px 36px 2px rgba(0,0,0,.34);overflow:hidden">
<div class="a" style="left:0;top:0;width:326px;height:30px;background:#fff"></div>
</div>
<div class="l" style="left:1060px;top:279px;color:#000;font-size:12.500px;font-weight:500;letter-spacing:.6px">수식</div>
<div class="t" style="left:1309px;top:278px;color:#000;font-size:13px;font-weight:bold">?</div>
<svg class="a" style="left:1348px;top:281px" width="12" height="12" viewBox="0 0 12 12"><path d="M1 1 L11 11 M11 1 L1 11" stroke="#111" stroke-width="1.100" fill="none"/></svg>
<div class="l" style="left:1058px;top:311px;color:#000;font-size:12.500px">수식<span class="n">(<u>F</u>):</span></div>
<div class="a" style="left:1058px;top:330px;width:313px;height:23px;background:#fff;border:1px solid #b4b4b4"></div>
<div class="l n sx" style="left:1061.500px;top:332px;color:#000;font-size:12.500px;transform:scaleX(.87)">=SUM(LEFT)</div>
<div class="l" style="left:1058px;top:355.500px;color:#000;font-size:12.500px;letter-spacing:.6px;font-weight:500">숫자 형식<span class="n">(<u>N</u>):</span></div>
<div class="a" style="left:1058px;top:376px;width:313px;height:23px;background:#fff;border:1px solid #b4b4b4"></div>
<div class="a" style="left:1354px;top:377px;width:1px;height:21px;background:#e2e2e2"></div>
<svg class="a" style="left:1357px;top:384px" width="10" height="7" viewBox="0 0 10 7"><path d="M1 1 L5 5 L9 1" stroke="#444" stroke-width="1" fill="none"/></svg>
<div class="l" style="left:1058px;top:403px;color:#000;font-size:12.500px;letter-spacing:.6px;font-weight:500">함수 마법사<span class="n">(<u>U</u>):</span></div>
<div class="l" style="left:1220px;top:403px;color:#939393;font-size:12.500px;letter-spacing:.6px;font-weight:400">책갈피 붙여넣기<span class="n">(B):</span></div>
<div class="a" style="left:1058px;top:422px;width:152px;height:24px;background:#fff;border:1px solid #b4b4b4"></div>
<div class="a" style="left:1192px;top:422px;width:18px;height:24px;background:#fff;border:1px solid #3c7fb1;box-shadow:inset 0 0 0 1px #d6e8f5"></div>
<svg class="a" style="left:1196px;top:431px" width="10" height="7" viewBox="0 0 10 7"><path d="M1 1 L5 5 L9 1" stroke="#444" stroke-width="1" fill="none"/></svg>
<div class="a" style="left:1219px;top:422px;width:152px;height:25px;background:#efefef;border:1px solid #c6c6c6"></div>
<div class="a" style="left:1354px;top:423px;width:1px;height:23px;background:#d8d8d8"></div>
<svg class="a" style="left:1357px;top:431px" width="10" height="7" viewBox="0 0 10 7"><path d="M1 1 L5 5 L9 1" stroke="#b0b0b0" stroke-width="1" fill="none"/></svg>
<!-- buttons -->
<div class="a" style="left:1213px;top:452px;width:72px;height:37px;background:#f4fafd"></div>
<div class="a" style="left:1215px;top:460px;width:68px;height:1px;background:#2f7ba6"></div>
<div class="a" style="left:1215px;top:484px;width:68px;height:1px;background:#2f7ba6"></div>
<div class="t" style="left:1249px;top:464px;color:#000;font-size:12.500px;font-weight:500">확인</div>
<div class="a" style="left:1210px;top:449px;width:78px;height:43px;border:3px solid #cc1f1f;border-radius:3px;box-shadow:0 0 0 1.500px rgba(255,255,255,.85),inset 0 0 0 1.500px rgba(255,255,255,.85)"></div>
<div class="a" style="left:1296px;top:460px;width:74px;height:25px;background:#fdfdfd;border:1px solid #d0d0d0;border-radius:4px"></div>
<div class="t" style="left:1333px;top:464px;color:#000;font-size:12.500px;font-weight:500">취소</div>
<!-- dropdown list -->
<div class="a" style="left:1058px;top:446px;width:152px;height:121px;background:#fff;border:1px solid #6e6e6e;border-right-color:#ddd;overflow:hidden">
<div class="a" style="left:134px;top:0;width:17px;height:121px;background:#f0f0f0"></div>
<div class="a" style="left:142px;top:66px;width:2px;height:37px;background:#8a8a8a"></div>
<div class="l li n" style="top:0px">MOD</div>
<div class="l li n" style="top:15px">NOT</div>
<div class="l li n" style="top:30px">OR</div>
<div class="l li n" style="top:45px">PRODUCT</div>
<div class="l li n" style="top:60px">ROUND</div>
<div class="l li n" style="top:75px">SIGN</div>
<div class="a" style="left:0;top:91.500px;width:134px;height:11px;background:#0078d7;border-left:1px dotted #cfe6f8;border-right:1px dotted #cfe6f8"></div>
<div class="l li n" style="top:90px;color:#fff">SUM</div>
<div class="l li n" style="top:105px">TRUE</div>
</div>
<!-- red boxes -->
<div class="a" style="left:1049px;top:300px;width:136px;height:58px;border:3px solid #cc1f1f;border-radius:3px;box-shadow:0 0 0 1.500px rgba(255,255,255,.85),inset 0 0 0 1.500px rgba(255,255,255,.85)"></div>
<div class="a" style="left:1051px;top:533px;width:149px;height:21px;border:3px solid #cc1f1f;border-radius:3px;box-shadow:0 0 0 2px rgba(255,255,255,.9),inset 0 0 0 2px #fff"></div>
<!--/DIALOG-->
<div class="bk" style="left:0;top:0;width:1448px;height:2px"></div>
<div class="bk" style="left:0;top:719px;width:1448px;height:2px"></div>
<div class="bk" style="left:0;top:0;width:2px;height:721px"></div>
<div class="bk" style="left:1446px;top:0;width:2px;height:721px"></div>
</div>
</body>
</html>
